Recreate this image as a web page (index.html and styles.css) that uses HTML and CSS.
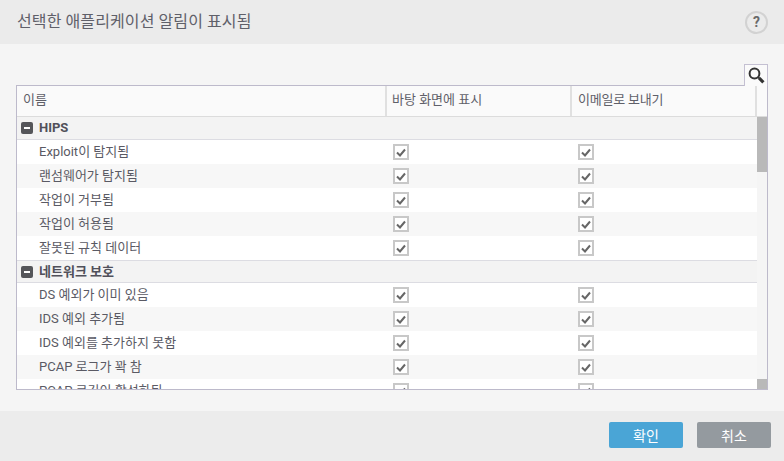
FILE: index.html
```html
<!DOCTYPE html>
<html lang="ko">
<head>
<meta charset="utf-8">
<title>알림</title>
<link rel="stylesheet" href="styles.css">
</head>
<body>
<div class="dialog">
  <header class="top">
    <h1 class="title">선택한 애플리케이션 알림이 표시됨</h1>
    <span class="help">?</span>
  </header>
  <main class="content">
    <div class="tools">
      <span class="search">
        <svg width="19" height="19" viewBox="0 0 19 19"><circle cx="7.5" cy="7.5" r="4.9" fill="none" stroke="#333" stroke-width="2"/><path d="M11.2 11.2l1.2 1.2" stroke="#333" stroke-width="2" fill="none"/><path d="M12.2 12.2l4.2 4.2" stroke="#333" stroke-width="3.2" fill="none"/></svg>
      </span>
    </div>
    <div class="table">
      <div class="head">
        <div class="hcell">이름</div>
        <div class="hcell">바탕 화면에 표시</div>
        <div class="hcell">이메일로 보내기</div>
        <div class="hcell hlast"></div>
      </div>
      <div class="scrollarea">
        <div class="rows">
          <div class="group"><span class="minus"></span>HIPS</div>
          <div class="row"><span class="name">Exploit이 탐지됨</span><span class="cb"><svg class="tick" viewBox="0 0 10 9"><path d="M1 4.5L4 7.5L9 1.5"/></svg></span><span class="cb"><svg class="tick" viewBox="0 0 10 9"><path d="M1 4.5L4 7.5L9 1.5"/></svg></span></div>
          <div class="row alt"><span class="name">랜섬웨어가 탐지됨</span><span class="cb"><svg class="tick" viewBox="0 0 10 9"><path d="M1 4.5L4 7.5L9 1.5"/></svg></span><span class="cb"><svg class="tick" viewBox="0 0 10 9"><path d="M1 4.5L4 7.5L9 1.5"/></svg></span></div>
          <div class="row"><span class="name">작업이 거부됨</span><span class="cb"><svg class="tick" viewBox="0 0 10 9"><path d="M1 4.5L4 7.5L9 1.5"/></svg></span><span class="cb"><svg class="tick" viewBox="0 0 10 9"><path d="M1 4.5L4 7.5L9 1.5"/></svg></span></div>
          <div class="row alt"><span class="name">작업이 허용됨</span><span class="cb"><svg class="tick" viewBox="0 0 10 9"><path d="M1 4.5L4 7.5L9 1.5"/></svg></span><span class="cb"><svg class="tick" viewBox="0 0 10 9"><path d="M1 4.5L4 7.5L9 1.5"/></svg></span></div>
          <div class="row"><span class="name">잘못된 규칙 데이터</span><span class="cb"><svg class="tick" viewBox="0 0 10 9"><path d="M1 4.5L4 7.5L9 1.5"/></svg></span><span class="cb"><svg class="tick" viewBox="0 0 10 9"><path d="M1 4.5L4 7.5L9 1.5"/></svg></span></div>
          <div class="group group-next"><span class="minus"></span>네트워크 보호</div>
          <div class="row"><span class="name">DS 예외가 이미 있음</span><span class="cb"><svg class="tick" viewBox="0 0 10 9"><path d="M1 4.5L4 7.5L9 1.5"/></svg></span><span class="cb"><svg class="tick" viewBox="0 0 10 9"><path d="M1 4.5L4 7.5L9 1.5"/></svg></span></div>
          <div class="row alt"><span class="name">IDS 예외 추가됨</span><span class="cb"><svg class="tick" viewBox="0 0 10 9"><path d="M1 4.5L4 7.5L9 1.5"/></svg></span><span class="cb"><svg class="tick" viewBox="0 0 10 9"><path d="M1 4.5L4 7.5L9 1.5"/></svg></span></div>
          <div class="row"><span class="name">IDS 예외를 추가하지 못함</span><span class="cb"><svg class="tick" viewBox="0 0 10 9"><path d="M1 4.5L4 7.5L9 1.5"/></svg></span><span class="cb"><svg class="tick" viewBox="0 0 10 9"><path d="M1 4.5L4 7.5L9 1.5"/></svg></span></div>
          <div class="row alt"><span class="name">PCAP 로그가 꽉 참</span><span class="cb"><svg class="tick" viewBox="0 0 10 9"><path d="M1 4.5L4 7.5L9 1.5"/></svg></span><span class="cb"><svg class="tick" viewBox="0 0 10 9"><path d="M1 4.5L4 7.5L9 1.5"/></svg></span></div>
          <div class="row"><span class="name">PCAP 로깅이 활성화됨</span><span class="cb"><svg class="tick" viewBox="0 0 10 9"><path d="M1 4.5L4 7.5L9 1.5"/></svg></span><span class="cb"><svg class="tick" viewBox="0 0 10 9"><path d="M1 4.5L4 7.5L9 1.5"/></svg></span></div>
        </div>
        <div class="scrollbar">
          <div class="thumb"></div>
          <div class="thumb-end"></div>
        </div>
      </div>
    </div>
  </main>
  <footer class="bottom">
    <button class="btn ok">확인</button>
    <button class="btn cancel">취소</button>
  </footer>
</div>
</body>
</html>
```

FILE: styles.css
```css
* { box-sizing: border-box; }
html, body { margin: 0; padding: 0; }
body {
  width: 784px;
  height: 461px;
  overflow: hidden;
  font-family: "Roboto", "Noto Sans CJK KR", sans-serif;
  font-size: 13px;
  color: #55555f;
}
.dialog { display: flex; flex-direction: column; height: 461px; background: #f5f5f5; }
.top {
  height: 44px;
  background: #ebebeb;
  display: flex;
  align-items: center;
  justify-content: space-between;
  padding: 0 16px 0 17px;
}
.title { margin: 0; font-size: 16px; font-weight: 400; letter-spacing: 0.1px; color: #5f6069; line-height: 44px; }
.help {
  width: 23px;
  height: 23px;
  border: 2px solid #d2d2d2;
  border-radius: 50%;
  display: flex;
  align-items: center;
  justify-content: center;
  font-size: 14px;
  font-weight: 700;
  color: #6a6a6a;
}
.content { height: 367px; padding: 20px 16px 0; }
.tools { display: flex; justify-content: flex-end; height: 21px; }
.search {
  width: 24px;
  height: 22px;
  border: 1px solid #c4c0d2;
  border-bottom: 0;
  background: #fafafa;
  display: flex;
  align-items: center;
  justify-content: center;
  position: relative;
  z-index: 1;
}
.table {
  width: 752px;
  height: 305px;
  border: 1px solid #bdbacb;
  background: #fff;
  display: flex;
  flex-direction: column;
}
.head {
  display: grid;
  grid-template-columns: 370px 185px 185px 10px;
  height: 31px;
  background: #fafafa;
  border-bottom: 1px solid #dcdcdc;
}
.hcell {
  border-right: 2px solid #e0e0e0;
  padding: 0 0 0 6px;
  line-height: 27px;
  color: #5f6069;
  height: 30px;
}
.hcell:nth-child(2) { padding-left: 5px; }
.hcell:nth-child(3) { letter-spacing: -0.2px; }
.hlast { border-right: 0; padding: 0; }
.scrollarea { display: flex; height: 272px; overflow: hidden; }
.rows { width: 740px; flex: none; overflow: hidden; }
.group {
  height: 23px;
  background: #f3f3f3;
  border-bottom: 1px solid #dcdce2;
  display: flex;
  align-items: center;
  padding-left: 4px;
  font-weight: 700;
  color: #50505a;
  line-height: 22px;
}
.group-next { border-top: 1px solid #dcdce2; }
.minus {
  width: 12px;
  height: 12px;
  border-radius: 2px;
  background: #55565a;
  margin-right: 6px;
  display: flex;
  align-items: center;
  justify-content: center;
}
.minus::after { content: ""; width: 6px; height: 2px; background: #fff; }
.row {
  display: grid;
  grid-template-columns: 370px 185px 185px;
  height: 24px;
  align-items: center;
  background: #fff;
}
.row.alt { background: #f7f7f7; }
.name { padding-left: 22px; color: #5a5a64; line-height: 24px; }
.cb {
  width: 16px;
  height: 16px;
  border: 2px solid #c8c8c8;
  background: #fff;
  margin-left: 6px;
  display: flex;
  align-items: center;
  justify-content: center;
}
.tick { width: 10px; height: 9px; }
.tick path { fill: none; stroke: #666; stroke-width: 2; }
.scrollbar {
  width: 10px;
  flex: none;
  background: #f5f5f5;
  display: flex;
  flex-direction: column;
  justify-content: space-between;
}
.thumb { height: 55px; background: #b9b9b9; }
.thumb-end { height: 10px; background: #b9b9b9; }
.bottom {
  height: 50px;
  background: #ececec;
  display: flex;
  justify-content: flex-end;
  gap: 14px;
  padding: 11px 13px 0 0;
}
.btn {
  width: 74px;
  height: 26px;
  border: 0;
  border-radius: 2px;
  color: #fff;
  font-family: inherit;
  font-size: 14px;
  padding: 0;
}
.ok { background: #4aa5d6; }
.cancel { background: #949a9f; }
```
